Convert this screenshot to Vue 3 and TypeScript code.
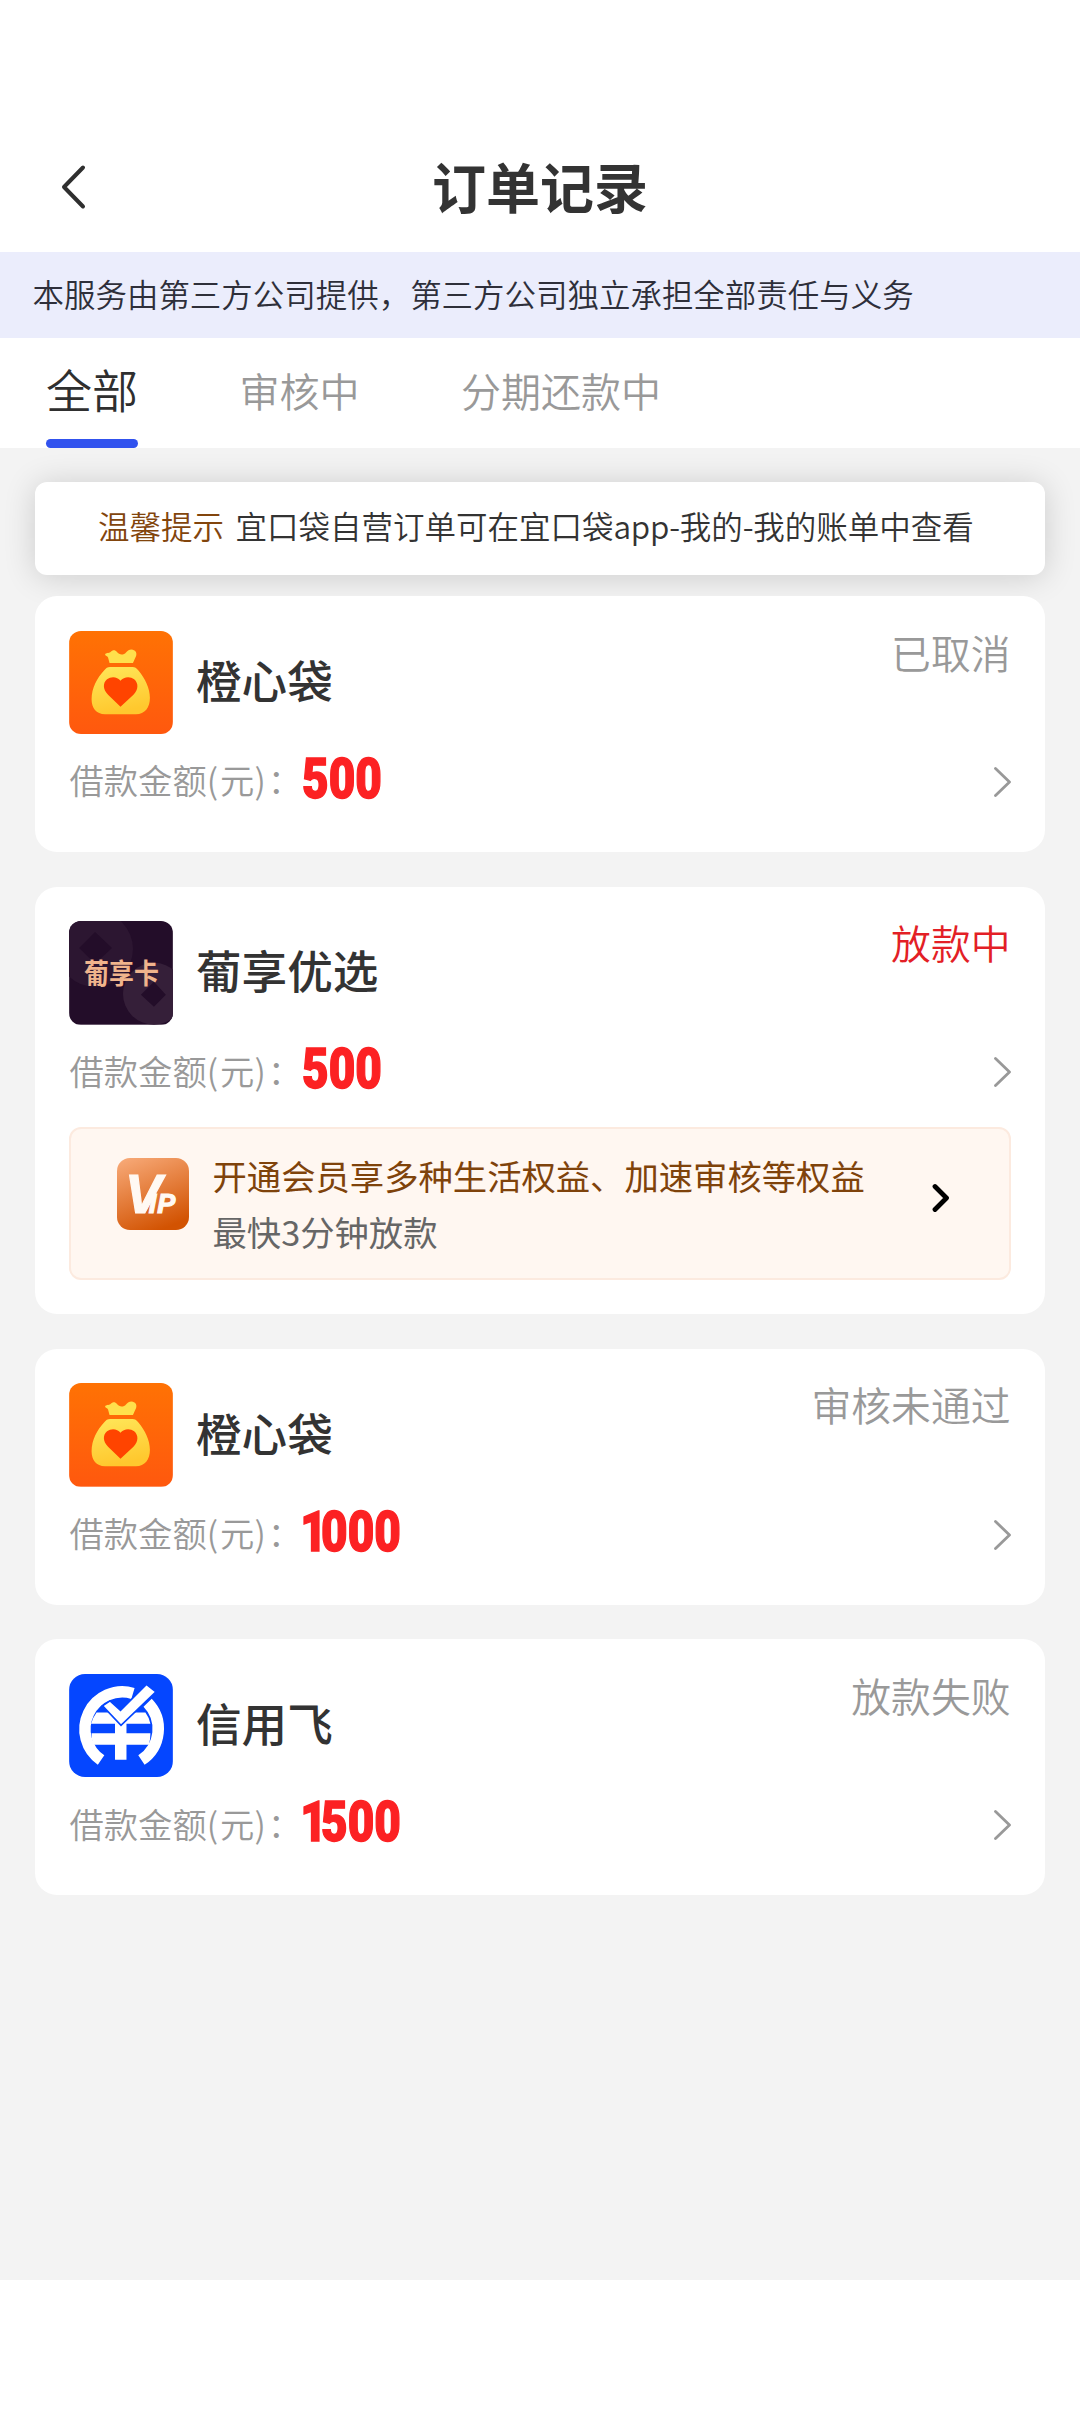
<script setup lang="ts">
import { ref } from 'vue'

type Logo = 'bag' | 'grape' | 'credit'

interface Order {
  name: string
  logo: Logo
  status: string
  active?: boolean
  amount: number
  vip?: boolean
}

const tabs: string[] = ['全部', '审核中', '分期还款中']
const current = ref<number>(0)

const orders: Order[] = [
  { name: '橙心袋', logo: 'bag', status: '已取消', amount: 500 },
  { name: '葡享优选', logo: 'grape', status: '放款中', active: true, amount: 500, vip: true },
  { name: '橙心袋', logo: 'bag', status: '审核未通过', amount: 1000 },
  { name: '信用飞', logo: 'credit', status: '放款失败', amount: 1500 },
]
</script>

<template>
  <div class="page">
    <header class="header">
      <svg class="back" viewBox="0 0 26 46" fill="none">
        <path d="M23 3.5 4 23l19 19.5" stroke="#2f2f2f" stroke-width="4" stroke-linecap="round" stroke-linejoin="round" />
      </svg>
      <h1 class="title">订单记录</h1>
    </header>

    <div class="notice">本服务由第三方公司提供，第三方公司独立承担全部责任与义务</div>

    <nav class="tabs">
      <button
        v-for="(tab, i) in tabs"
        :key="tab"
        class="tab"
        :class="{ on: current === i }"
        @click="current = i"
      >{{ tab }}</button>
    </nav>

    <main class="content">
      <div class="tip">
        <span class="tip-label">温馨提示</span>
        <span class="tip-text">宜口袋自营订单可在宜口袋<span class="latin">app-</span>我的<span class="latin">-</span>我的账单中查看</span>
      </div>

      <section v-for="(order, i) in orders" :key="i" class="card">
        <div class="top">
          <svg v-if="order.logo === 'bag'" class="logo" viewBox="0 0 104 104">
            <defs>
              <linearGradient :id="'bg' + i" x1="0" y1="0" x2="0" y2="1">
                <stop offset="0" stop-color="#ff7204" />
                <stop offset="1" stop-color="#ff580e" />
              </linearGradient>
              <linearGradient :id="'sack' + i" x1="0" y1="0" x2=".25" y2="1">
                <stop offset="0" stop-color="#ffe75a" />
                <stop offset="1" stop-color="#ffc82e" />
              </linearGradient>
            </defs>
            <rect width="104" height="104" :fill="`url(#bg${i})`" />
            <path d="M36 23.5C37 21.5 39.5 22.5 41.500 21C43.500 19 46 18.500 48 21C50 24 54.500 24.500 57 21.500C59.500 18.500 62.500 17.800 65.500 19.500C68.500 21.500 67.500 25 66 27.500L64 32H40.500L39 26.500C38.300 25 36.500 25 36 23.500Z" fill="#ffe04c" />
            <path d="M41 36H63.500C66 36 67.500 37 69.500 39.500C76 47.500 81 57 81 67C81 77 76 83.500 67 83.500H36C27 83.500 22.500 77 22.500 68.500C22.500 57 28 47 35 39.500C37 37 38.500 36 41 36Z" :fill="`url(#sack${i})`" />
            <path d="M51.500 76L39 64C33.500 58.500 33.800 52 38 48.500C42.500 45 48.500 46 51.500 50C54.500 46 61 45 65.200 48.500C69.800 52.500 69.500 59 64.500 64Z" fill="#ff4400" />
          </svg>

          <svg v-else-if="order.logo === 'grape'" class="logo" viewBox="0 0 104 104">
            <rect width="104" height="104" fill="#230d29" />
            <circle cx="26" cy="28" r="38" fill="#2c1631" />
            <circle cx="85" cy="73" r="31" fill="#351f39" />
            <path d="M26 11 43 27 26 43 10 27ZM85 61 97 74 85 86 72 74Z" fill="#230d29" />
            <text class="logo-text" transform="translate(15 63) scale(1 1.120)" x="0" y="0">葡享卡</text>
          </svg>

          <svg v-else class="logo round" viewBox="0 0 104 104" fill="none">
            <rect width="104" height="104" fill="#0546ff" />
            <path d="M32 86.300A37.500 37.500 0 0 1 64 19.500M78.700 28.800A37.500 37.500 0 0 1 72.500 86.300" stroke="#fff" stroke-width="11.500" />
            <path d="M27.500 38.500H76.500Q80 43 81.500 50H22Q24 43 27.500 38.500ZM22.500 59.500H81.500Q81.500 66 80 71H24Q22.500 66 22.500 59.500ZM46 48H57.500V86H46Z" fill="#fff" />
            <path d="M33.500 32 41 27 51.500 36.500 77.500 10.500 87 18 52 51.500Z" fill="#fff" stroke="#0546ff" stroke-width="1.600" />
          </svg>

          <h2 class="name">{{ order.name }}</h2>
          <span class="status" :class="{ active: order.active }">{{ order.status }}</span>
        </div>

        <div class="row">
          <span class="label">借款金额<span class="paren">(</span>元<span class="paren">)</span>：</span>
          <span class="amount"><span v-for="(d, k) in String(order.amount)" :key="k" :class="{ one: d === '1' }">{{ d }}</span></span>
          <svg class="arrow" viewBox="0 0 18 30" fill="none">
            <path d="M1.500 1.500 15.500 15 1.500 28.500" stroke="#999" stroke-width="2.800" stroke-linecap="round" stroke-linejoin="round" />
          </svg>
        </div>

        <div v-if="order.vip" class="vip">
          <svg class="vip-icon" viewBox="0 0 72 72">
            <defs>
              <linearGradient id="vip" x1=".2" y1="0" x2=".6" y2="1">
                <stop offset="0" stop-color="#f6a673" />
                <stop offset="1" stop-color="#d25302" />
              </linearGradient>
            </defs>
            <rect width="72" height="72" rx="13" fill="url(#vip)" />
            <text class="vip-text" x="8" y="55"><tspan font-size="55" letter-spacing="-13">V</tspan><tspan font-size="27" letter-spacing="1">IP</tspan></text>
          </svg>
          <div class="vip-lines">
            <p class="vip-title">开通会员享多种生活权益、加速审核等权益</p>
            <p class="vip-sub">最快3分钟放款</p>
          </div>
          <svg class="vip-arrow" viewBox="0 0 18 30" fill="none">
            <path d="M3 3.500 14.500 15 3 26.500" stroke="#000" stroke-width="4.800" stroke-linecap="round" stroke-linejoin="round" />
          </svg>
        </div>
      </section>
    </main>
  </div>
</template>

<style>
body {
  background: #fff;
}
</style>

<style scoped>
.page {
  width: 1080px;
  height: 2412px;
  display: flex;
  flex-direction: column;
  background: #fff;
  font-family: 'Noto Sans CJK SC', sans-serif;
  font-weight: 350;
  color: #2f2f2f;
  overflow: hidden;
}

h1,
h2,
p {
  margin: 0;
}

.header {
  display: flex;
  align-items: center;
  box-sizing: border-box;
  height: 252px;
  padding: 122px 60px 0;
}

.back {
  width: 26px;
  height: 46px;
}

.title {
  flex: 1;
  margin: -3px 26px 0 0;
  text-align: center;
  font-size: 54px;
  line-height: 60px;
  font-weight: 700;
  color: #333;
}

.notice {
  height: 86px;
  padding-left: 32.5px;
  background: #ebedfc;
  font-size: 31.47px;
  line-height: 83px;
  white-space: nowrap;
  color: #2e2f3a;
}

.tabs {
  display: flex;
  gap: 101.5px;
  height: 110px;
  padding-left: 46px;
}

.tab {
  display: flex;
  flex-direction: column;
  justify-content: flex-end;
  height: 110px;
  padding: 0;
  border: 0;
  background: none;
  font: inherit;
  font-size: 40px;
  line-height: 60px;
  color: #999;
  padding-bottom: 28px;
  box-sizing: border-box;
}

.tab.on {
  font-size: 46px;
  color: #2f2f2f;
  padding-bottom: 0;
}

.tab.on::after {
  content: '';
  height: 9px;
  margin-top: 21.5px;
  border-radius: 4.5px;
  background: #3152ee;
}

.content {
  display: flex;
  flex-direction: column;
  gap: 34.5px;
  box-sizing: border-box;
  height: 1832px;
  padding: 34px 35px 0;
  background: #f3f3f3;
}

.tip {
  display: flex;
  gap: 11.5px;
  align-items: center;
  box-sizing: border-box;
  height: 93px;
  padding: 0 0 7.5px 63px;
  margin-bottom: -13.5px;
  border-radius: 12px;
  background: #fff;
  box-shadow: 0 2px 32px rgba(0, 0, 0, 0.16);
  font-size: 31.5px;
  line-height: 44px;
  white-space: nowrap;
  color: #333;
}

.tip-label {
  color: #82450d;
}

.latin {
  letter-spacing: -0.3px;
}

.card {
  padding: 34.5px 34.5px 34.5px 34px;
  border-radius: 22px;
  background: #fff;
}

.top {
  display: flex;
  align-items: center;
}

.logo {
  width: 104px;
  height: 103.7px;
  border-radius: 12px;
}

.logo.round {
  border-radius: 16px;
}

.logo-text {
  font-size: 25px;
  font-weight: 700;
  fill: #f0b48c;
}

.name {
  margin: -7px 0 0 23px;
  font-size: 45.6px;
  line-height: 60px;
  font-weight: 500;
  color: #333;
}

.status {
  align-self: flex-start;
  margin-left: auto;
  font-size: 39.8px;
  line-height: 42px;
  color: #999;
}

.status.active {
  color: #e31f26;
}

.row {
  display: flex;
  align-items: center;
  height: 83.4px;
}

.label {
  width: 232.5px;
  padding-left: 0.5px;
  font-size: 34.3px;
  line-height: 50px;
  margin-top: 7px;
  white-space: nowrap;
  color: #999;
}

.paren {
  letter-spacing: 2px;
}

.amount {
  margin-top: 6px;
  font-family: Roboto, 'Liberation Sans', sans-serif;
  font-size: 55px;
  line-height: 60px;
  font-weight: 900;
  color: #fc2123;
  -webkit-text-stroke: 1.4px #fc2123;
  transform: scaleX(0.835);
  transform-origin: left;
}

.amount .one {
  margin-left: -2px;
  letter-spacing: -7px;
}

.arrow {
  width: 18px;
  height: 30px;
  margin: 12px -1px 0 auto;
}

.vip {
  display: flex;
  align-items: center;
  box-sizing: border-box;
  height: 153px;
  margin-top: 18.5px;
  padding: 0 59px 0 46px;
  border: 2px solid #fceadf;
  border-radius: 12px;
  background: #fff7f1;
}

.vip-icon {
  align-self: flex-start;
  width: 72px;
  height: 72px;
  margin-top: 29px;
}

.vip-text {
  font-family: 'Liberation Sans', sans-serif;
  font-weight: 700;
  font-style: italic;
  fill: #fff9f3;
  stroke: #fff9f3;
  stroke-width: 1.2px;
}

.vip-lines {
  margin: 0 0 0 23.5px;
  font-size: 34.35px;
  line-height: 56px;
  font-weight: 400;
  white-space: nowrap;
}

.vip-title {
  color: #7f430b;
}

.vip-sub {
  color: #666;
}

.vip-arrow {
  width: 18px;
  height: 30px;
  margin: -11px 0 0 auto;
}
</style>
